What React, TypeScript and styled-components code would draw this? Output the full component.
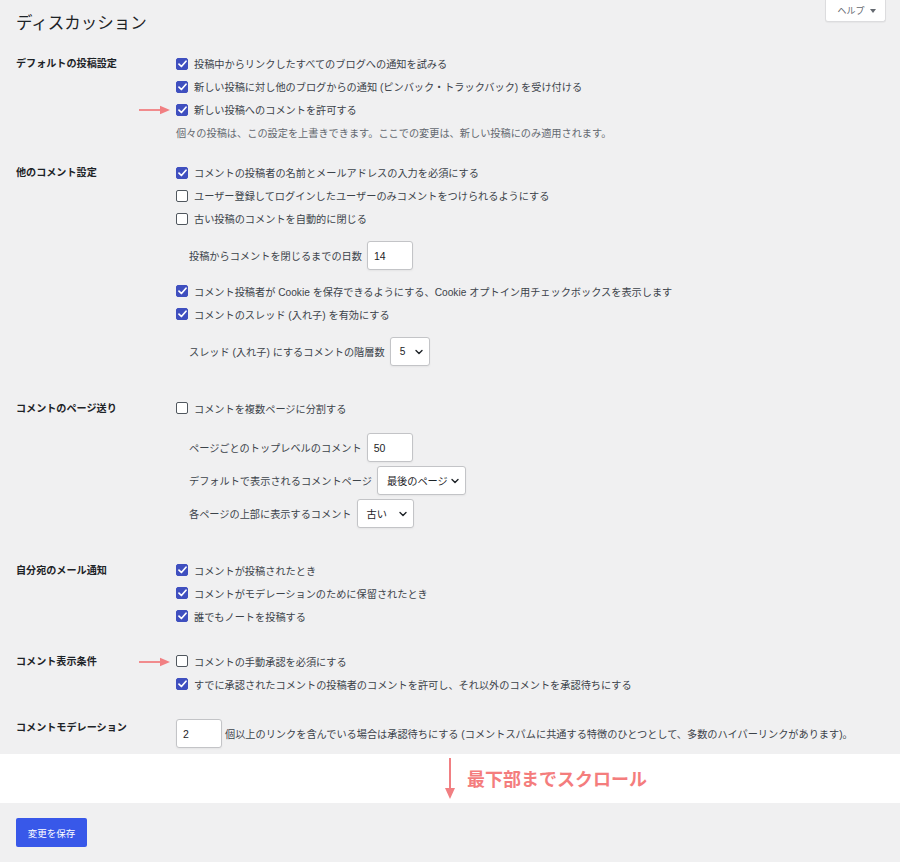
import React from "react";
import styled, { createGlobalStyle } from "styled-components";

const FONT = `"Liberation Sans", "Noto Sans CJK JP", sans-serif`;
const FS = "10.18px";

const Global = createGlobalStyle`
  html, body { margin: 0; padding: 0; background: #f0f0f1; }
  body { font-family: ${FONT}; color: #3c434a; }
`;

const Page = styled.div`
  width: 900px;
  min-height: 862px;
  display: flex;
  flex-direction: column;
  background: #f0f0f1;
`;

const Header = styled.header`
  display: flex;
  justify-content: space-between;
  align-items: flex-start;
  padding: 0 14px 0 16px;
`;

const Title = styled.h1`
  margin: 11px 0 17px;
  font-size: 16.5px;
  line-height: 24px;
  font-weight: 400;
  color: #1d2327;
`;

const HelpButton = styled.button`
  height: 22px;
  width: 61px;
  padding: 0 0 0 2px;
  border: 1px solid #dcdcde;
  border-top: none;
  border-radius: 0 0 3px 3px;
  background: #fff;
  box-shadow: 0 1px 1px rgba(0, 0, 0, 0.04);
  font-family: ${FONT};
  font-size: 9px;
  color: #646970;
  display: flex;
  align-items: center;
  justify-content: center;
  gap: 5px;
`;

const Caret = styled.span`
  width: 0;
  height: 0;
  border-left: 3px solid transparent;
  border-right: 3px solid transparent;
  border-top: 4px solid #646970;
`;

const Form = styled.div`
  padding-left: 16px;
  display: flex;
  flex-direction: column;
`;

const Section = styled.section<{ $top: number }>`
  display: grid;
  grid-template-columns: 160px 1fr;
  padding-top: ${(p) => p.$top}px;
`;

const Label = styled.div<{ $lh?: number }>`
  font-size: 10.1px;
  font-weight: 700;
  line-height: ${(p) => p.$lh ?? 23}px;
  color: #1d2327;
`;

const Content = styled.div`
  display: flex;
  flex-direction: column;
`;

const Row = styled.div`
  height: 23px;
  display: flex;
  align-items: center;
  gap: 6px;
  font-size: ${FS};
  position: relative;
`;

const Desc = styled.div`
  height: 22px;
  display: flex;
  align-items: center;
  font-size: ${FS};
  color: #646970;
`;

const Box = styled.span<{ $on: boolean }>`
  width: 12px;
  height: 12px;
  box-sizing: border-box;
  border-radius: 2px;
  flex: none;
  display: flex;
  align-items: center;
  justify-content: center;
  background: ${(p) => (p.$on ? "#3f4fbf" : "#fff")};
  border: 1px solid ${(p) => (p.$on ? "#3f4fbf" : "#50575e")};
`;

const Pointer = styled.svg`
  position: absolute;
  left: -37px;
  top: 7px;
`;

const FieldGroup = styled.div<{ $mt: number; $mb?: number }>`
  display: flex;
  flex-direction: column;
  gap: 4px;
  margin-top: ${(p) => p.$mt}px;
  margin-bottom: ${(p) => p.$mb ?? 0}px;
  padding-left: 13px;
`;

const Field = styled.div`
  display: flex;
  align-items: center;
  gap: 5px;
  font-size: ${FS};
  height: 29px;
`;

const TextInput = styled.div<{ $w: number }>`
  width: ${(p) => p.$w}px;
  height: 29px;
  box-sizing: border-box;
  background: #fff;
  border: 1px solid #c3c4c7;
  border-radius: 3px;
  box-shadow: 0 1px 2px rgba(0, 0, 0, 0.05);
  display: flex;
  align-items: center;
  padding-left: 6px;
  font-size: 10.5px;
  color: #1d2327;
  flex: none;
`;

const SelectBox = styled.div<{ $w: number }>`
  width: ${(p) => p.$w}px;
  height: 29px;
  box-sizing: border-box;
  background: #fff;
  border: 1px solid #c3c4c7;
  border-radius: 3px;
  box-shadow: 0 1px 2px rgba(0, 0, 0, 0.05);
  display: flex;
  align-items: center;
  justify-content: space-between;
  padding: 0 6px 0 9px;
  font-size: ${FS};
  color: #1d2327;
  flex: none;
`;

const InlineRow = styled.div`
  display: flex;
  align-items: center;
  gap: 3px;
  font-size: ${FS};
`;

const Band = styled.div`
  margin-top: 6px;
  height: 49px;
  background: #fff;
  display: flex;
  align-items: center;
  padding-left: 444px;
  gap: 11px;
`;

const ScrollNote = styled.span`
  font-size: 18px;
  font-weight: 700;
  color: #f47d7d;
  font-family: "Noto Sans CJK JP", sans-serif;
  margin-top: -2px;
`;

const Footer = styled.div`
  padding: 15px 0 16px 16px;
`;

const SaveButton = styled.button`
  width: 71px;
  height: 29px;
  border: none;
  border-radius: 2px;
  background: #3858e9;
  color: #fff;
  font-family: ${FONT};
  font-size: 9.5px;
  padding: 0;
`;

const Check = ({ on, label, arrow }: { on: boolean; label: string; arrow?: boolean }) => (
  <Row>
    {arrow && (
      <Pointer width="32" height="10" viewBox="0 0 32 10">
        <line x1="0" y1="5" x2="25" y2="5" stroke="#f17f82" strokeWidth="1.8" />
        <path d="M21 0.8 L31 5 L21 9.2 Z" fill="#f17f82" />
      </Pointer>
    )}
    <Box $on={on}>
      {on && (
        <svg width="9" height="8" viewBox="0 0 9 8">
          <path d="M1 4.2 L3.4 6.5 L8 1.2" fill="none" stroke="#fff" strokeWidth="1.7" strokeLinecap="round" strokeLinejoin="round" />
        </svg>
      )}
    </Box>
    <span>{label}</span>
  </Row>
);

const Chevron = () => (
  <svg width="8" height="6" viewBox="0 0 8 6">
    <path d="M1 1.5 L4 4.5 L7 1.5" fill="none" stroke="#1d2327" strokeWidth="1.4" strokeLinecap="round" strokeLinejoin="round" />
  </svg>
);

const Select = ({ w, value }: { w: number; value: string }) => (
  <SelectBox $w={w}>
    <span>{value}</span>
    <Chevron />
  </SelectBox>
);

export default function App() {
  return (
    <Page>
      <Global />
      <Header>
        <Title>ディスカッション</Title>
        <HelpButton>
          ヘルプ <Caret />
        </HelpButton>
      </Header>
      <Form>
        <Section $top={0}>
          <Label>デフォルトの投稿設定</Label>
          <Content>
            <Check on label="投稿中からリンクしたすべてのブログへの通知を試みる" />
            <Check on label="新しい投稿に対し他のブログからの通知 (ピンバック・トラックバック) を受け付ける" />
            <Check on arrow label="新しい投稿へのコメントを許可する" />
            <Desc>個々の投稿は、この設定を上書きできます。ここでの変更は、新しい投稿にのみ適用されます。</Desc>
          </Content>
        </Section>

        <Section $top={18}>
          <Label>他のコメント設定</Label>
          <Content>
            <Check on label="コメントの投稿者の名前とメールアドレスの入力を必須にする" />
            <Check on={false} label="ユーザー登録してログインしたユーザーのみコメントをつけられるようにする" />
            <Check on={false} label="古い投稿のコメントを自動的に閉じる" />
            <FieldGroup $mt={11} $mb={9.5}>
              <Field>
                投稿からコメントを閉じるまでの日数
                <TextInput $w={46}>14</TextInput>
              </Field>
            </FieldGroup>
            <Check on label="コメント投稿者が Cookie を保存できるようにする、Cookie オプトイン用チェックボックスを表示します" />
            <Check on label="コメントのスレッド (入れ子) を有効にする" />
            <FieldGroup $mt={11.5}>
              <Field>
                スレッド (入れ子) にするコメントの階層数
                <Select w={40} value="5" />
              </Field>
            </FieldGroup>
          </Content>
        </Section>

        <Section $top={30.5}>
          <Label>コメントのページ送り</Label>
          <Content>
            <Check on={false} label="コメントを複数ページに分割する" />
            <FieldGroup $mt={13.5}>
              <Field>
                ページごとのトップレベルのコメント
                <TextInput $w={46}>50</TextInput>
              </Field>
              <Field>
                デフォルトで表示されるコメントページ
                <Select w={89} value="最後のページ" />
              </Field>
              <Field>
                各ページの上部に表示するコメント
                <Select w={57} value="古い" />
              </Field>
            </FieldGroup>
          </Content>
        </Section>

        <Section $top={30.5}>
          <Label>自分宛のメール通知</Label>
          <Content>
            <Check on label="コメントが投稿されたとき" />
            <Check on label="コメントがモデレーションのために保留されたとき" />
            <Check on label="誰でもノートを投稿する" />
          </Content>
        </Section>

        <Section $top={22}>
          <Label>コメント表示条件</Label>
          <Content>
            <Check on={false} arrow label="コメントの手動承認を必須にする" />
            <Check on label="すでに承認されたコメントの投稿者のコメントを許可し、それ以外のコメントを承認待ちにする" />
          </Content>
        </Section>

        <Section $top={23.5}>
          <Label $lh={18}>コメントモデレーション</Label>
          <Content>
            <InlineRow>
              <TextInput $w={46}>2</TextInput>
              個以上のリンクを含んでいる場合は承認待ちにする (コメントスパムに共通する特徴のひとつとして、多数のハイパーリンクがあります)。
            </InlineRow>
          </Content>
        </Section>
      </Form>

      <Band>
        <svg width="12" height="42" viewBox="0 0 12 42">
          <line x1="6" y1="0" x2="6" y2="33" stroke="#f17f82" strokeWidth="2" />
          <path d="M1 30 L6 41 L11 30 Z" fill="#f17f82" />
        </svg>
        <ScrollNote>最下部までスクロール</ScrollNote>
      </Band>

      <Footer>
        <SaveButton>変更を保存</SaveButton>
      </Footer>
    </Page>
  );
}
